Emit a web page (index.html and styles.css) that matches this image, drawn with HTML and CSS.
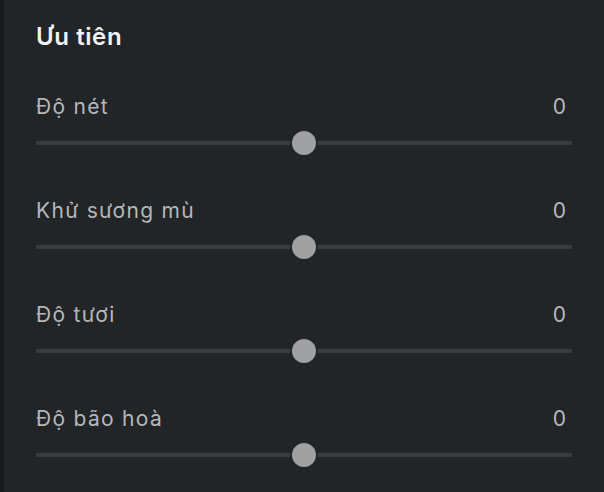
FILE: index.html
```html
<!DOCTYPE html>
<html lang="vi">
<head>
<meta charset="utf-8">
<link rel="stylesheet" href="styles.css">
</head>
<body>
<div class="strip"></div>
<section class="panel">
  <h2 class="title">Ưu tiên</h2>
  <div class="row">
    <div class="row-head"><span class="label">Độ nét</span><span class="value">0</span></div>
    <div class="slider"><div class="track"></div><div class="thumb" style="left:50%"></div></div>
  </div>
  <div class="row">
    <div class="row-head"><span class="label">Khử sương mù</span><span class="value">0</span></div>
    <div class="slider"><div class="track"></div><div class="thumb" style="left:50%"></div></div>
  </div>
  <div class="row">
    <div class="row-head"><span class="label">Độ tươi</span><span class="value">0</span></div>
    <div class="slider"><div class="track"></div><div class="thumb" style="left:50%"></div></div>
  </div>
  <div class="row">
    <div class="row-head"><span class="label">Độ bão hoà</span><span class="value">0</span></div>
    <div class="slider"><div class="track"></div><div class="thumb" style="left:50%"></div></div>
  </div>
</section>
</body>
</html>
```
FILE: styles.css
```css
html, body {
  margin: 0;
  padding: 0;
  height: 100%;
}
body {
  display: flex;
  background: #222528;
  font-family: Inter, "Noto Sans", sans-serif;
  overflow: hidden;
}
.strip {
  width: 4px;
  flex: none;
  background: #18191b;
}
.panel {
  flex: 1;
  padding: 22px 32px 0 32px;
  display: flex;
  flex-direction: column;
}
.title {
  margin: 0 0 43px 0;
  font-size: 24px;
  line-height: 30px;
  font-weight: 600;
  letter-spacing: 0.6px;
  color: #f2f2f2;
}
.row {
  display: flex;
  flex-direction: column;
  margin-bottom: 44px;
}
.row-head {
  display: flex;
  justify-content: space-between;
  align-items: baseline;
  height: 24px;
  line-height: 24px;
}
.label {
  font-size: 21px;
  letter-spacing: 1.3px;
  color: #b6b7b9;
}
.value {
  font-size: 21px;
  color: #b6b7b9;
  margin-right: 6px;
}
.slider {
  position: relative;
  height: 24px;
  margin-top: 12px;
}
.track {
  position: absolute;
  left: 0;
  right: 0;
  top: 10px;
  height: 4px;
  border-radius: 2px;
  background: #3a3c3f;
}
.thumb {
  position: absolute;
  top: 0;
  width: 24px;
  height: 24px;
  margin-left: -12px;
  border-radius: 50%;
  background: #a0a0a1;
  box-shadow: 0 0 0 2px #222528;
}
```
